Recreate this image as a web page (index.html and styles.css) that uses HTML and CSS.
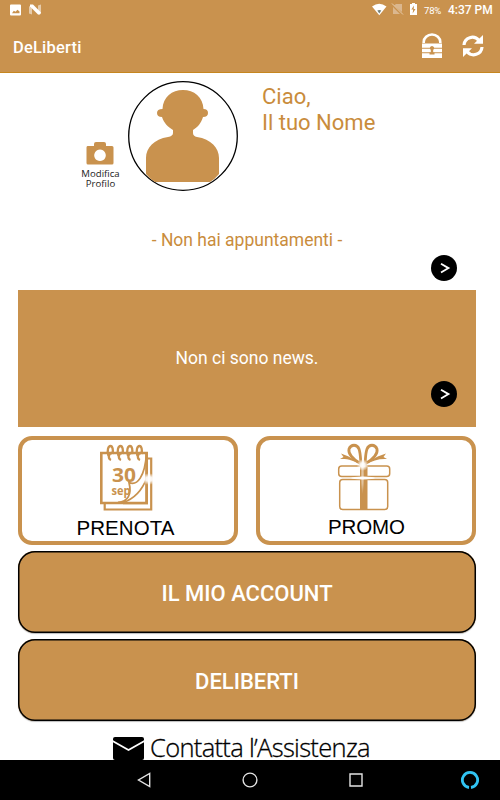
FILE: index.html
```html
<!DOCTYPE html>
<html lang="it">
<head>
	<meta charset="utf-8">
	<title>DeLiberti</title>
	<link rel="stylesheet" href="styles.css">
</head>

<body>

<div class="status">
	<svg class="status-left" width="34" height="12" viewBox="0 0 34 12">
		<path fill="#fff" fill-rule="evenodd" d="M1 .5h9a1 1 0 0 1 1 1v9a1 1 0 0 1-1 1H1a1 1 0 0 1-1-1v-9a1 1 0 0 1 1-1zM2 9.300h7.500V7.500L7.500 5.800 5.500 7.800 3.800 6.800z"/>
		<path fill="#e6cbaa" d="M19 2.500l3-1v9l-3-1zM28 1.500l3-1v9l-3 1z"/>
		<path fill="#fff" d="M20 .5h3l8 8-1 2h-2l-8-8z"/>
	</svg>
	<svg class="status-right" width="48" height="14" viewBox="0 0 48 14">
		<path fill="#fff" d="M0 4.500Q7.200-1 14.500 4.500L7.300 13.200z"/>
		<path fill="#738078" d="M5.300 8.500q2-1 4 0l-2 3z"/>
		<path fill="#dbb78e" d="M22 3.500L24 2h6v8zM21 5l7 7h-7z"/>
		<path stroke="#e6cbaa" stroke-width="1" d="M20 1.500l11 11"/>
		<path fill="#fff" d="M38 2h2V1h3v1h2v11h-7z"/>
		<path fill="#c9924e" d="M42 3.500l-2.700 4h1.900l-.6 4 2.900-4.600h-1.800z"/>
	</svg>
	<span class="battery">78%</span>
	<span class="clock">4:37 PM</span>
</div>

<div class="appbar">
	<span class="title">DeLiberti</span>
	<svg class="lock" width="20" height="26" viewBox="0 0 20 26">
		<path fill="none" stroke="#fff" stroke-width="2.600" d="M1.700 10V9a8.300 7.500 0 0 1 16.600 0v1"/>
		<path fill="#fff" d="M0 10.500h20v4.300H0zM0 15.700h20v3.600H0zM0 20.200h20V25H0z"/>
		<path fill="#c9924e" d="M10 13a2.200 2.200 0 0 1 1.200 4v2.500h1.300v1.900h-5v-1.900h1.300V17A2.200 2.200 0 0 1 10 13z"/>
	</svg>
	<svg class="refresh" width="22" height="22" viewBox="0 0 22 22">
		<path fill="none" stroke="#fff" stroke-width="3.200" d="M2 10C2.500 2.500 12-.5 17 5.500M20 12C19.500 19.500 10 22.500 5 16.500"/>
		<path fill="#fff" d="M21 0v8.800h-9zM1 22v-8.800h9z"/>
	</svg>
</div>

<div class="profile">
	<a class="edit">
		<svg width="28" height="23" viewBox="0 0 28 23">
			<path fill="#c9924e" fill-rule="evenodd" d="M1.500 4H8V2q0-2 2-2h8q2 0 2 2v2h6q1.500 0 1.500 1.500V21q0 1.500-1.500 1.500H2Q.500 22.500.5 21V5.500Q.5 4 1.500 4zM14 7.500a5.800 5.800 0 1 0 .01 0z"/>
		</svg>
		<span>Modifica<br>Profilo</span>
	</a>
	<svg class="avatar" width="112" height="112" viewBox="0 0 112 112">
		<circle cx="56" cy="56" r="54.300" fill="#fff" stroke="#000" stroke-width="1.300"/>
		<path fill="#c9924e" d="M35.500 29C36 17 45 10 56 10s20 7 20.500 19q4.500 0 4.500 4t-5 4c-2 6-5 10-10 13v3q0 3 4 4c14 2 22 11 22 21v16q-4 5-9 8H28q-5-3-9-8V78c0-10 8-19 22-21q5-1 5-4v-3c-5-3-9-7-11-13q-5 0-5-4t5.500-4z"/>
	</svg>
	<div class="hello">Ciao,<br>Il tuo Nome</div>
</div>

<div class="appointments">
	<p>- Non hai appuntamenti -</p>
	<svg class="more" width="26" height="26" viewBox="0 0 26 26">
		<circle cx="13" cy="13" r="13"/>
		<path fill="none" stroke="#fff" stroke-width="1.800" d="M10 8.700l7.500 4.400-7.500 4.500"/>
	</svg>
</div>

<div class="news">
	<p>Non ci sono news.</p>
	<svg class="more" width="26" height="26" viewBox="0 0 26 26">
		<circle cx="13" cy="13" r="13"/>
		<path fill="none" stroke="#fff" stroke-width="1.800" d="M10 8.700l7.500 4.400-7.500 4.500"/>
	</svg>
</div>

<div class="cards">
	<a class="card">
		<svg width="212" height="101" viewBox="22 440 212 101">
			<defs>
				<radialGradient id="shine">
					<stop offset="0" stop-color="#fff"/>
					<stop offset=".4" stop-color="#fff" stop-opacity=".9"/>
					<stop offset="1" stop-color="#fff" stop-opacity="0"/>
				</radialGradient>
			</defs>
			<g fill="none" stroke="#c9924e" stroke-width="2.200">
				<path d="M148 458.500h3.200v51h-46.500v-6"/>
				<path stroke-width="2.600" d="M101.300 453h45.400v50h-45.400z"/>
			</g>
			<text class="day" x="112" y="481.500" textLength="24" lengthAdjust="spacingAndGlyphs">30</text>
			<text class="mon" x="111.500" y="494.500" textLength="19" lengthAdjust="spacingAndGlyphs">sep</text>
			<path fill="#fff" d="M122 502c7-4 10-10 8-20 8 4 13-6 15-19v39z"/>
			<path fill="none" stroke="#c9924e" stroke-width="1.800" d="M118 502.500c10-1 14-8 11-20 8 4 16-6 17.500-29M123 502.500c12-4 19-12 23.500-24"/>
			<path fill="none" stroke="#c9924e" stroke-width="2.600" d="M146.700 453v50H123"/>
			<g fill="none" stroke="#c9924e" stroke-width="2.300">
				<path d="M112 453c-4 0-4 6-1 7M122 453c-4 0-4 6-1 7M131.500 453c-4 0-4 6-1 7M141 453c-4 0-4 6-1 7"/>
				<path d="M108.500 456c-2-6 0-10 2-10s3 4 2 8M118.500 456c-2-6 0-10 2-10s3 4 2 8M128 456c-2-6 0-10 2-10s3 4 2 8M137.500 456c-2-6 0-10 2-10s3 4 2 8"/>
			</g>
			<ellipse cx="149" cy="479" rx="8" ry="6" fill="url(#shine)"/>
			<text class="label" x="76.500" y="535" textLength="98">PRENOTA</text>
		</svg>
	</a>
	<a class="card">
		<svg width="212" height="101" viewBox="260 440 212 101">
			<g fill="none" stroke="#c9924e" stroke-width="1.500">
				<rect x="338.700" y="466" width="51" height="10.500" rx="3"/>
				<rect x="339.700" y="479.500" width="48" height="30" rx="3"/>
			</g>
			<path fill="#c9924e" d="M360 467h7.500v9.500H360zM360 479.500h7.500v30H360z"/>
			<g fill="none" stroke="#c9924e" stroke-width="2.800">
				<path d="M361 464c-9-5-13-11-12-15 2-5 8-5 10 0 1.500 4 1.500 10 2 15z"/>
				<path d="M365 464c9-5 13-11 12-15-2-5-8-5-10 0-1.500 4-1.500 10-2 15z"/>
			</g>
			<path fill="#c9924e" d="M361 464.500c-5-4-9-7-20-11l2.500 3.500-3.500 2c8-.5 13 1.500 21 5.500zM365 464.500c5-4 9-7 21-11l-2.500 3.500 3.500 2c-8-.5-14 1.500-22 5.500z"/>
			<circle cx="362.700" cy="465" r="6" fill="url(#shine)"/>
			<ellipse cx="362.500" cy="476" rx="1.800" ry="18" fill="url(#shine)" opacity=".5"/>
			<ellipse cx="363" cy="478" rx="12" ry="1.500" fill="#fff"/>
			<text class="label" x="328" y="534" textLength="77">PROMO</text>
		</svg>
	</a>
</div>

<a class="button">IL MIO ACCOUNT</a>
<a class="button small">DELIBERTI</a>

<div class="contact">
	<svg width="31" height="23" viewBox="0 0 31 23">
		<rect width="31" height="23" rx="2"/>
		<path fill="none" stroke="#fff" stroke-width="1.800" d="M-.5 4l16 9 16-9"/>
	</svg>
	<span>Contatta l’Assistenza</span>
</div>

<div class="navbar">
	<svg width="14" height="16" viewBox="0 0 14 16"><path d="M12.700 1.500v13L1.500 8z"/></svg>
	<svg width="16" height="16" viewBox="0 0 16 16"><circle cx="8" cy="8" r="6.900"/></svg>
	<svg width="14" height="14" viewBox="0 0 14 14"><path d="M1 1h12v12H1z"/></svg>
	<svg class="alexa" width="20" height="20" viewBox="0 0 20 20"><path d="M9 17.500a7.600 7.600 0 1 1 2 0"/></svg>
</div>

</body>
</html>
```

FILE: styles.css
```css
body {width: 500px; height: 800px; margin: 0; overflow: hidden; background: #fff; color: #c98c3c; font-family: Roboto, sans-serif; display: flex; flex-direction: column;}
svg {display: block; flex: none;}
p {margin: 0;}
.status {height: 20px; background: #c9924e; color: #fff; display: flex; align-items: center; box-sizing: border-box; padding: 0 7px 0 10px;}
.status-right {margin: -2px 4px 0 auto;}
.battery {font-size: 9.5px; letter-spacing: -.2px; width: 24px;}
.clock {font-size: 12px; font-weight: 500; width: 45px; white-space: nowrap;}
.appbar {height: 53px; box-sizing: border-box; background: #c9924e; border-bottom: 1px solid #c6861f; color: #fff; display: flex; align-items: center; padding: 0 16px 0 13px;}
.title {font-size: 16.5px; font-weight: 500; letter-spacing: .2px; padding-top: 2px; flex: 1;}
.lock {margin-right: 20px;}
.profile {height: 127px; display: flex; align-items: flex-start;}
.edit {margin: 69px 0 0 79px; width: 43px; display: flex; flex-direction: column; align-items: center; color: #222; font: 9.6px/9.5px "Open Sans", sans-serif; text-align: center;}
.edit svg {margin-right: 2px;}
.edit span {padding-top: 4px;}
.avatar {margin: 7px 0 0 5px;}
.hello {margin: 11px 0 0 23px; font-size: 22px; line-height: 25.5px;}
.appointments {height: 90px; padding: 0 18px; display: flex; flex-direction: column; text-align: center;}
.appointments p {margin-top: 29px; margin-right: 6px; font-size: 17.5px; line-height: 22px;}
.more {align-self: flex-end; margin: 4px 19px 0 0;}
.news {height: 137px; margin: 0 24px 0 18px; background: #c9924e; color: #fff; display: flex; flex-direction: column; text-align: center;}
.news p {padding-top: 57px; font-size: 17.5px; line-height: 22px;}
.news .more {margin-top: 12px;}
.appointments .more {margin-right: 25px;}
.cards {display: flex; gap: 18px; margin: 9px 24px 6px 18px;}
.card {width: 220px; height: 109px; box-sizing: border-box; border: 4px solid #c9924e; border-radius: 14px;}
.day {font: bold 19px "Open Sans", sans-serif; fill: #c9924e;}
.mon {font: bold 12px "Open Sans", sans-serif; fill: #c9924e;}
.label {font: 20.5px "Liberation Sans", sans-serif; fill: #000;}
.button {height: 82px; box-sizing: border-box; margin: 0 24px 6px 18px; border-radius: 17px; background: #c9924e; box-shadow: inset 0 0 0 1.5px #000, 0 1px 1px #0004; color: #fff; font-size: 22px; font-weight: 500; display: flex; align-items: center; justify-content: center; padding-top: 2px;}
.small {margin-bottom: 0;}
.contact {height: 39px; padding: 0 0 0 113px; box-sizing: border-box; display: flex; align-items: flex-end; gap: 6px; color: #000; font: 300 25.5px/22px "Open Sans", sans-serif; -webkit-text-stroke: .3px #000;}
.contact span {letter-spacing: -.68px; white-space: nowrap; padding-bottom: 2px;}
.navbar {height: 40px; background: #000; display: flex; align-items: center; padding-left: 137px; gap: 91px;}
.navbar svg {fill: none; stroke: #e4e4e4; stroke-width: 1.4;}
.navbar .alexa {stroke: #31c4f3; stroke-width: 2.8; margin-left: 6px;}
```
